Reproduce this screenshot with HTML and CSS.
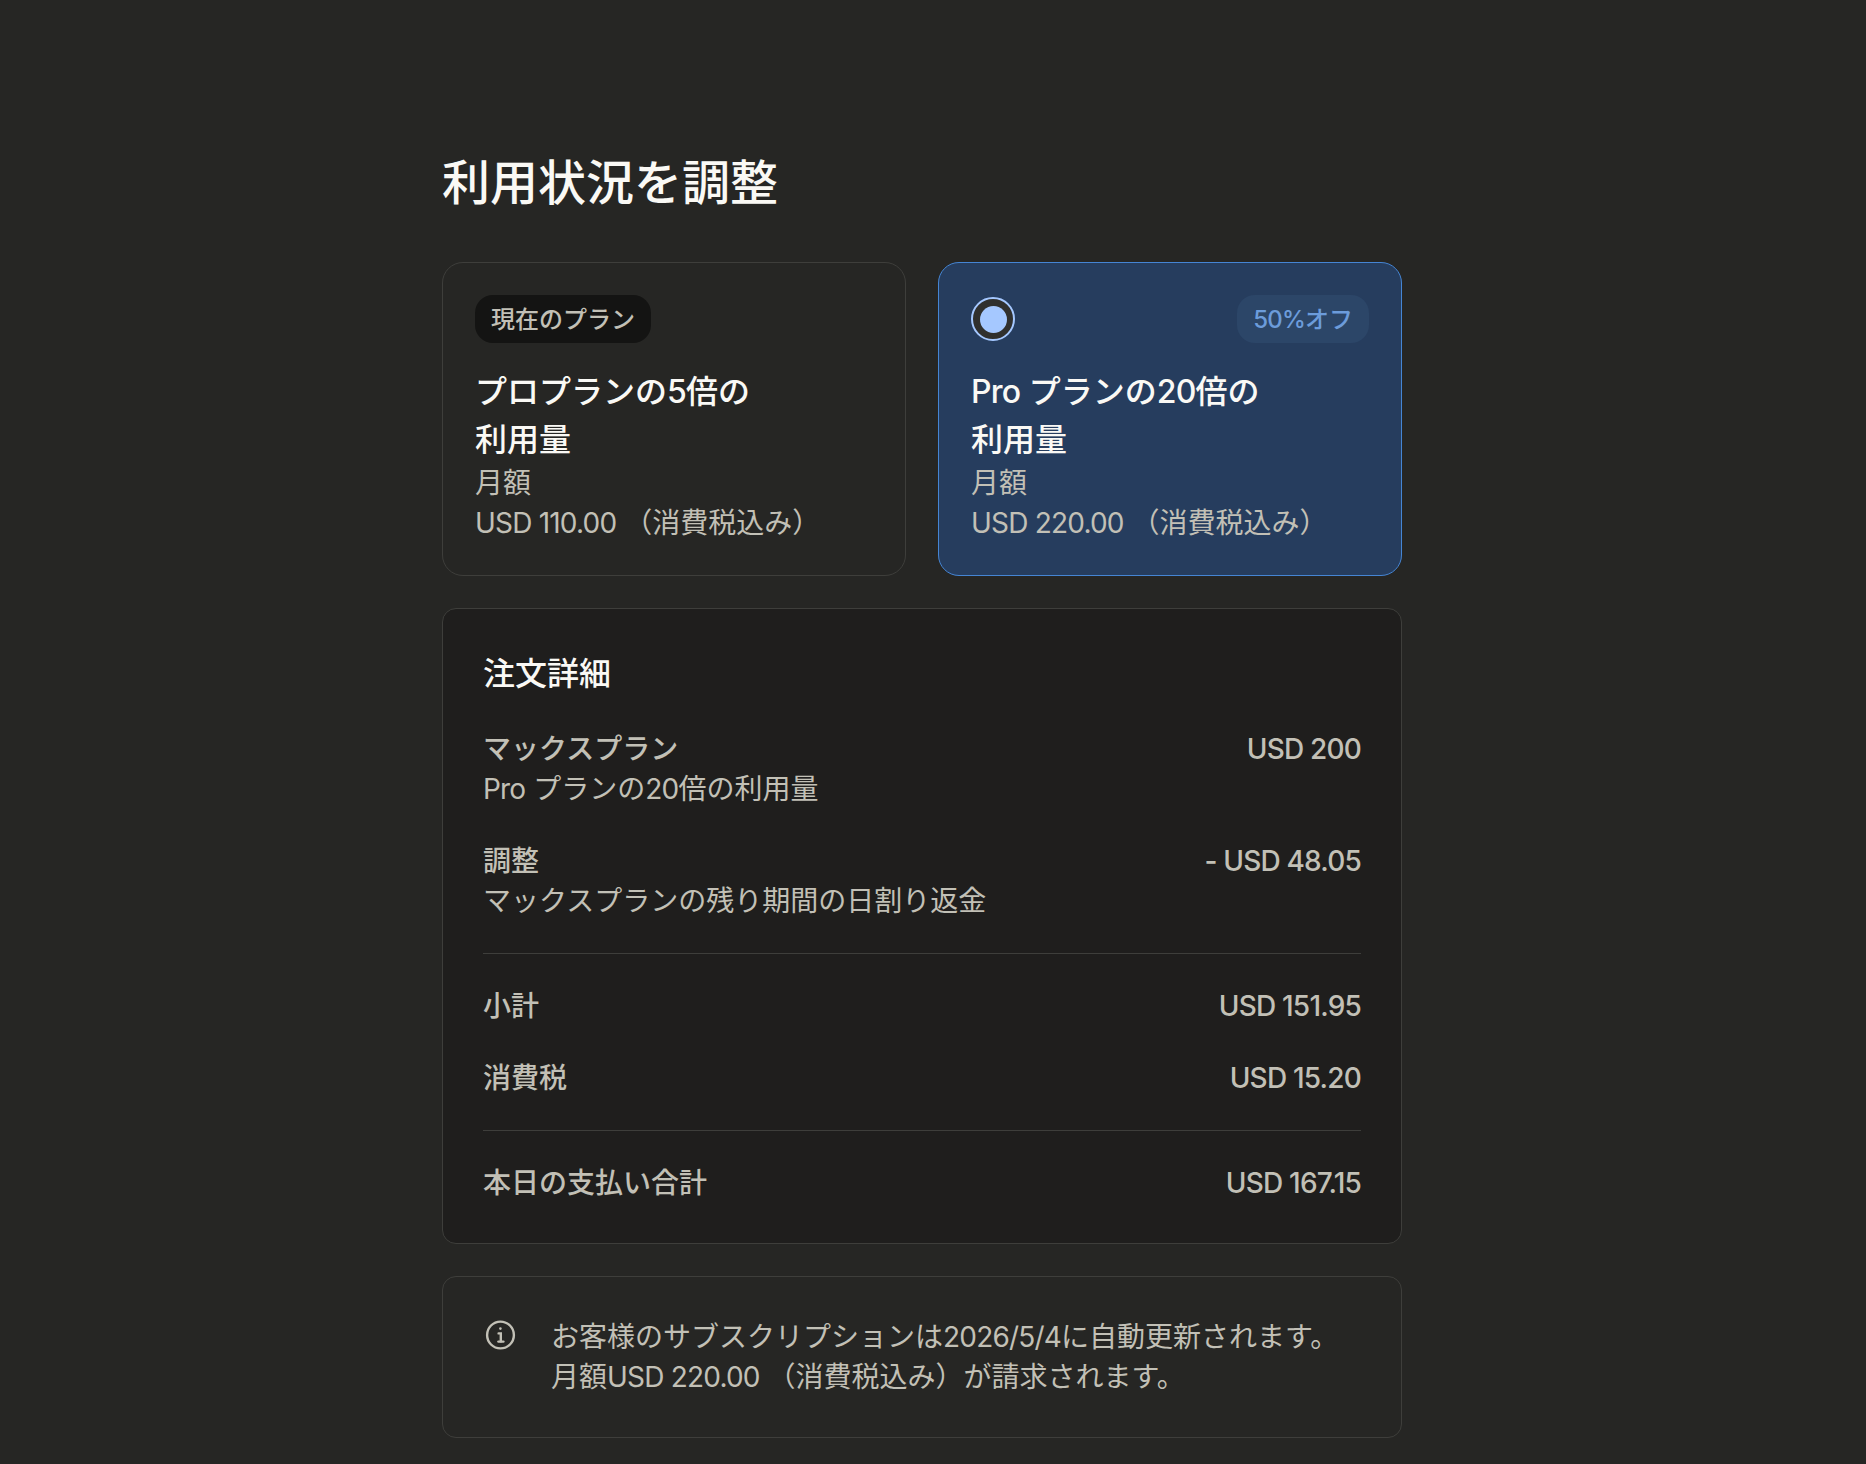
FILE: index.html
```html
<!DOCTYPE html>
<html lang="ja">

<head>
  <meta charset="UTF-8">
  <meta name="viewport" content="width=device-width, initial-scale=1.0">
  <title>利用状況を調整</title>
  <link rel="stylesheet" href="styles.css">
</head>

<body>
  <div class="container">
    <h1 class="page-title">利用状況を調整</h1>

    <div class="plans">
      <div class="plan-card">
        <div class="plan-top">
          <span class="tag tag-current">現在のプラン</span>
        </div>
        <h3 class="plan-name">プロプランの<span class="num">5</span>倍の<br>利用量</h3>
        <p class="plan-line">月額</p>
        <p class="plan-line"><span class="num">USD 110.00</span> （消費税込み）</p>
      </div>

      <div class="plan-card selected">
        <div class="plan-top">
          <span class="radio"><span class="radio-dot"></span></span>
          <span class="tag tag-discount"><span class="num">50%</span>オフ</span>
        </div>
        <h3 class="plan-name"><span class="num">Pro</span> プランの<span class="num">20</span>倍の<br>利用量</h3>
        <p class="plan-line">月額</p>
        <p class="plan-line"><span class="num">USD 220.00</span> （消費税込み）</p>
      </div>
    </div>

    <div class="order">
      <h2 class="order-title">注文詳細</h2>

      <div class="order-row">
        <div>
          <div class="strong">マックスプラン</div>
          <div><span class="num">Pro</span> プランの<span class="num">20</span>倍の利用量</div>
        </div>
        <div class="strong num">USD 200</div>
      </div>

      <div class="order-row">
        <div>
          <div class="strong">調整</div>
          <div>マックスプランの残り期間の日割り返金</div>
        </div>
        <div class="strong num">- USD 48.05</div>
      </div>

      <hr class="divider">

      <div class="order-row strong">
        <div>小計</div>
        <div class="num">USD 151.95</div>
      </div>

      <div class="order-row strong">
        <div>消費税</div>
        <div class="num">USD 15.20</div>
      </div>

      <hr class="divider">

      <div class="order-row strong">
        <div>本日の支払い合計</div>
        <div class="num">USD 167.15</div>
      </div>
    </div>

    <div class="notice">
      <svg class="notice-icon" viewBox="0 0 35 35" fill="none" stroke="currentColor" stroke-width="2.4" stroke-linecap="round">
        <circle cx="17.5" cy="17" r="13.4"></circle>
        <path d="M15.6 15.4h2.2v8"></path>
        <path d="M15.4 23.6h5"></path>
        <circle cx="17.4" cy="10.6" r="1.3" fill="currentColor" stroke="none"></circle>
      </svg>
      <p class="notice-text">お客様のサブスクリプションは<span class="num">2026/5/4</span>に自動更新されます。<br>月額<span class="num">USD 220.00</span> （消費税込み）が請求されます。</p>
    </div>
  </div>
</body>

</html>
```

FILE: styles.css
```css
body {
  margin: 0;
  background-color: #262624;
  color: #c2c0b6;
  font-family: Inter, "Noto Sans CJK JP", sans-serif;
  font-size: 28px;
  line-height: 40px;
}

.container {
  width: 960px;
  margin-left: 442px;
  padding-top: 154px;
}

.page-title {
  margin: 0 0 50px;
  font-size: 48px;
  line-height: 58px;
  font-weight: 500;
  color: #faf9f5;
}

/* latin runs are set a bit tighter than the japanese around them */
.num {
  letter-spacing: -0.8px;
}

.plans {
  display: grid;
  grid-template-columns: 1fr 1fr;
  gap: 32px;
  margin-bottom: 32px;
}

.plan-card {
  padding: 32px;
  border: 1px solid #3e3e3b;
  border-radius: 21px;
}

.plan-card.selected {
  background-color: #263d5e;
  border-color: #4585d4;
}

.plan-top {
  display: flex;
  justify-content: space-between;
  align-items: center;
  height: 48px;
  margin-bottom: 25px;
}

.tag {
  height: 48px;
  padding: 0 16px;
  border-radius: 18px;
  font-size: 24px;
  line-height: 50px;
  font-weight: 500;
}

.tag-current {
  background-color: #141413;
}

.tag-discount {
  background-color: #2c4668;
  color: #6c9cdb;
}

.radio {
  display: flex;
  justify-content: center;
  align-items: center;
  box-sizing: border-box;
  width: 44px;
  height: 44px;
  background-color: #30302e;
  border: 2px solid #a5c8ff;
  border-radius: 50%;
}

.radio-dot {
  width: 27px;
  height: 27px;
  background-color: #a5c8ff;
  border-radius: 50%;
}

.plan-name {
  margin: 0 0 -1px;
  font-size: 32px;
  line-height: 48px;
  font-weight: 500;
  color: #faf9f5;
}

.plan-line {
  margin: 0;
}

.order {
  padding: 40px;
  margin-bottom: 32px;
  background-color: #1f1e1d;
  border: 1px solid #3e3e3b;
  border-radius: 14px;
}

.order-title {
  margin: 0 0 -2px;
  font-size: 32px;
  line-height: 50px;
  font-weight: 500;
  color: #faf9f5;
}

.order-row {
  display: flex;
  justify-content: space-between;
  margin-top: 32px;
}

.strong {
  font-weight: 500;
}

.divider {
  height: 1px;
  margin: 32px 0 0;
  background-color: #3e3e3b;
  border: none;
}

.notice {
  display: flex;
  gap: 33px;
  padding: 40px 40px;
  margin-bottom: 27px;
  border: 1px solid #3e3e3b;
  border-radius: 14px;
}

.notice-icon {
  flex: none;
  width: 35px;
  height: 35px;
  margin-top: 1px;
}

.notice-text {
  margin: 0;
}
```
